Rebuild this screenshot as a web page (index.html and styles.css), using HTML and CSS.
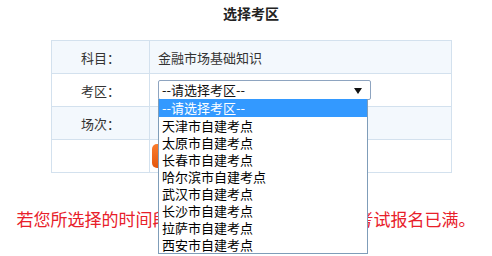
FILE: index.html
```html
<!DOCTYPE html>
<html lang="zh-CN">
<head>
    <meta charset="UTF-8">
    <title>选择考区</title>
    <link rel="stylesheet" href="styles.css">
</head>
<body>
    <div id="mainBlock">
        <p class="titleStyle">选择考区</p>
        <table id="examTable">
            <tr class="rowBlue">
                <td class="labelCell">科目：</td>
                <td class="valueCell">金融市场基础知识</td>
            </tr>
            <tr>
                <td class="labelCell">考区：</td>
                <td class="valueCell">
                    <div class="selectBox">
                        <span>--请选择考区--</span>
                        <i class="selectArrow"></i>
                        <ul class="optionList">
                            <li class="optionActive">--请选择考区--</li>
                            <li>天津市自建考点</li>
                            <li>太原市自建考点</li>
                            <li>长春市自建考点</li>
                            <li>哈尔滨市自建考点</li>
                            <li>武汉市自建考点</li>
                            <li>长沙市自建考点</li>
                            <li>拉萨市自建考点</li>
                            <li>西安市自建考点</li>
                        </ul>
                    </div>
                </td>
            </tr>
            <tr class="rowBlue">
                <td class="labelCell">场次：</td>
                <td class="valueCell"></td>
            </tr>
            <tr>
                <td class="labelCell"></td>
                <td class="valueCell"><button class="submitButton">确定</button></td>
            </tr>
        </table>
    </div>
    <p class="tipStyle">若您所选择的时间段没有考位，则说明该考区考试报名已满。</p>
</body>
</html>
```

FILE: styles.css
```css
*{
    margin: 0;
    padding: 0;
}
html, body{
    height: 256px;
    overflow: hidden;
}
body{
    font-family: "Noto Sans CJK SC", "Liberation Sans", sans-serif;
    font-size: 13px;
    color: #333;
    background-color: #fff;
}
#mainBlock{
    width: 400px;
    margin-left: 51px;
}
.titleStyle{
    height: 40px;
    line-height: 26px;
    text-align: center;
    font-size: 14px;
    font-weight: bold;
    color: #222;
}
#examTable{
    width: 401px;
    border-collapse: collapse;
}
#examTable td{
    height: 32px;
    border: 1px solid #d3e1ee;
    padding: 0;
}
.rowBlue{
    background-color: #f3f8fd;
}
.labelCell{
    width: 97px;
    text-align: center;
}
.valueCell{
    padding-left: 8px !important;
    position: relative;
}
.selectBox{
    position: relative;
    width: 208px;
    height: 18px;
    line-height: 17px;
    border: 1px solid #8ea4c0;
    border-radius: 2px;
    background-color: #fff;
    padding-left: 3px;
    box-sizing: content-box;
    color: #111;
}
.selectArrow{
    position: absolute;
    right: 8px;
    top: 7px;
    width: 0;
    height: 0;
    border-left: 4px solid transparent;
    border-right: 4px solid transparent;
    border-top: 6px solid #111;
}
.optionList{
    position: absolute;
    left: -1px;
    top: 18px;
    width: 208px;
    list-style: none;
    background-color: #fff;
    border: 1px solid #7f9db9;
    border-top: none;
    z-index: 10;
}
.optionList li{
    height: 17px;
    line-height: 17px;
    padding-left: 3px;
    color: #000;
}
.optionList .optionActive{
    height: 18px;
    background-color: #3399ff;
    color: #fff;
}
.submitButton{
    width: 90px;
    height: 24px;
    margin-left: -6px;
    border: none;
    border-radius: 5px;
    background: linear-gradient(#fb7d2e, #e3560c);
    color: #fff;
    font-family: inherit;
    font-size: 13px;
}
.tipStyle{
    margin-top: 33px;
    text-align: center;
    font-size: 17px;
    color: #e8202a;
}
```
